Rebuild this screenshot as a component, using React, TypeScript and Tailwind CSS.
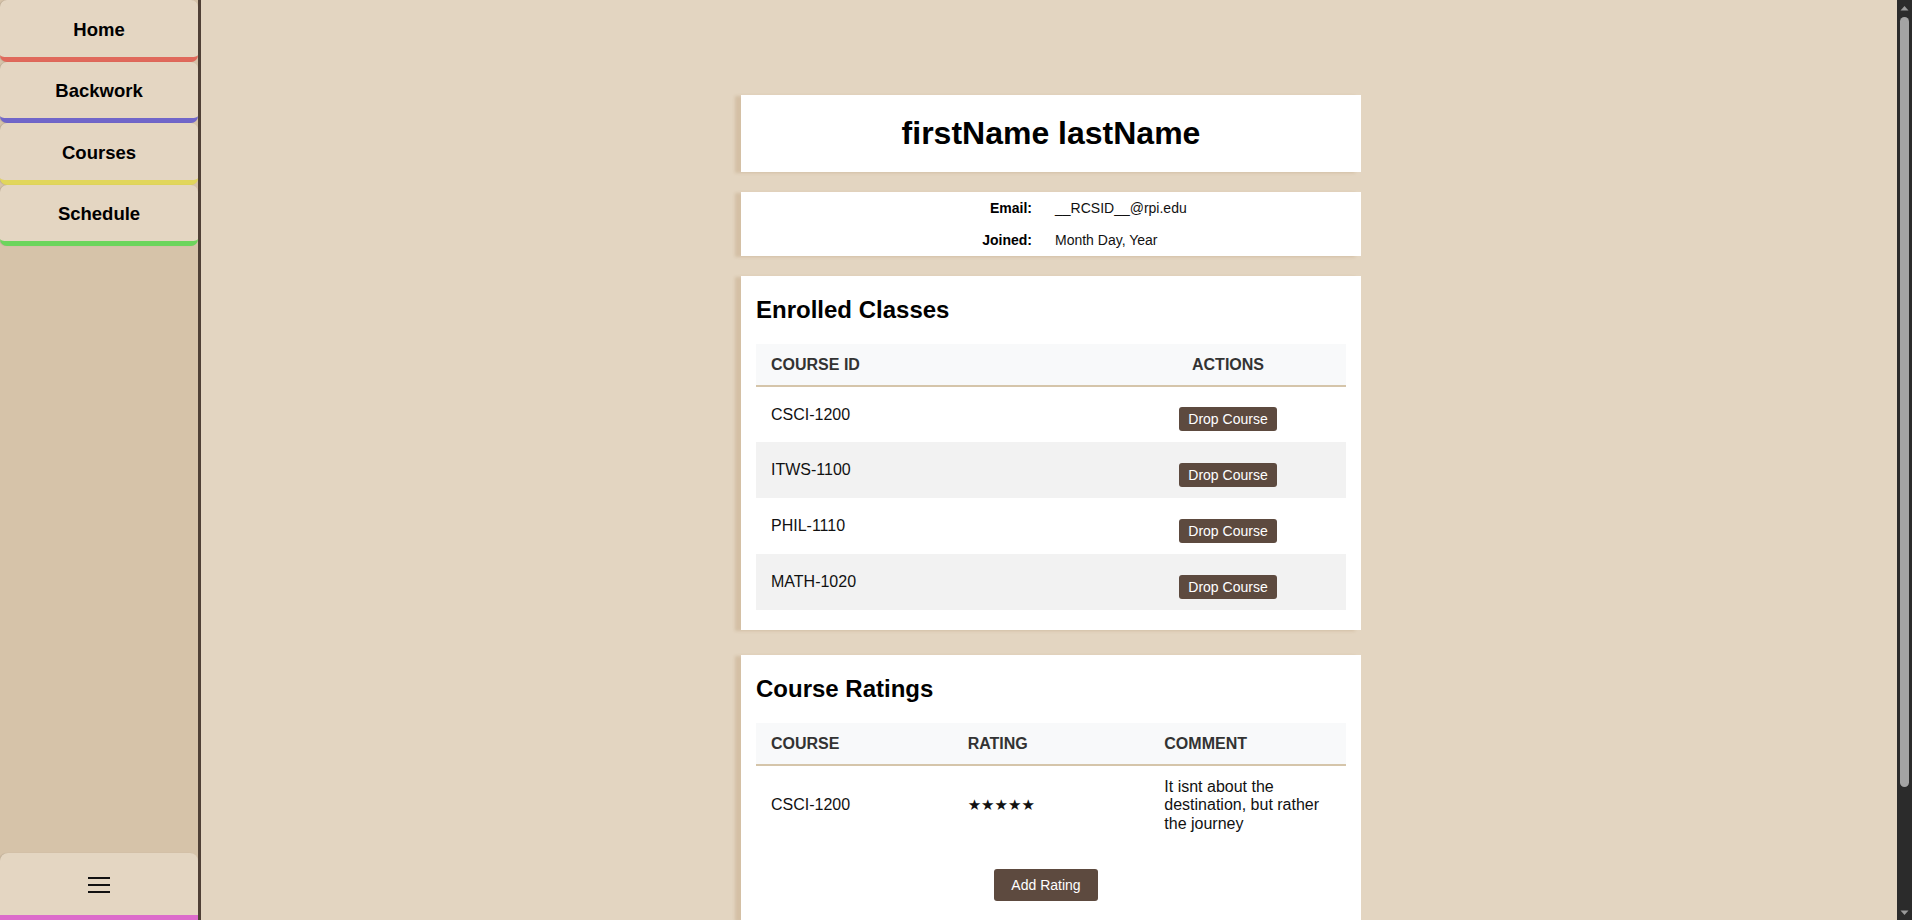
import React from 'react';

const NAV_ITEMS = [
  { label: 'Home', bar: 'border-[#e0695b]' },
  { label: 'Backwork', bar: 'border-[#7066c9]' },
  { label: 'Courses', bar: 'border-[#e1d65c]' },
  { label: 'Schedule', bar: 'border-[#6cd55c]' },
];

const ENROLLED = ['CSCI-1200', 'ITWS-1100', 'PHIL-1110', 'MATH-1020'];

const RATINGS = [
  { course: 'CSCI-1200', stars: 5, comment: 'It isnt about the destination, but rather the journey' },
];

const Card: React.FC<{ className?: string; children: React.ReactNode }> = ({ className = '', children }) => (
  <div className={`bg-white shadow-[-6px_1px_3px_rgba(160,120,70,0.22)] ${className}`}>{children}</div>
);

// dark page scrollbar, as drawn in the screenshot
const ScrollBar = () => (
  <div className="w-[15px] shrink-0 h-full bg-[#2b2b2b] flex flex-col items-center">
    <div className="h-[15px] w-full flex items-center justify-center">
      <svg width="9" height="6" viewBox="0 0 9 6">
        <path d="M0.5 5.5 L4.5 1 L8.5 5.5 Z" fill="#9a9a9a" />
      </svg>
    </div>
    <div className="flex-1 w-full flex justify-center">
      <div className="mt-[2px] h-[770px] w-[9px] rounded-full bg-[#a3a3a3]" />
    </div>
    <div className="h-[15px] w-full flex items-center justify-center">
      <svg width="9" height="6" viewBox="0 0 9 6">
        <path d="M0.5 0.5 L4.5 5 L8.5 0.5 Z" fill="#9a9a9a" />
      </svg>
    </div>
  </div>
);

export default function App() {
  return (
    <div className="flex h-screen w-full overflow-hidden font-['Liberation_Sans',Arial,sans-serif] text-black">
      {/* Sidebar */}
      <aside className="w-[201px] shrink-0 h-full bg-[#d6c3a9] border-r-[3px] border-[#4f4036] flex flex-col justify-between">
        <nav className="flex flex-col">
          {NAV_ITEMS.map((item) => (
            <div
              key={item.label}
              className={`h-[61.5px] pt-[3px] bg-[#e4d6c2] border-b-[5px] ${item.bar} rounded-[7px] flex items-center justify-center text-[18.5px] font-bold cursor-pointer shadow-[-1px_0_1px_rgba(0,0,0,0.12)]`}
            >
              {item.label}
            </div>
          ))}
        </nav>
        <div className="h-[67px] bg-[#e4d6c2] border-b-[5px] border-[#dc6bcb] rounded-t-[8px] flex items-center justify-center shadow-[-1px_0_1px_rgba(0,0,0,0.12)]">
          <svg width="24" height="18" viewBox="0 0 24 18" className="mt-[1px]">
            <rect x="1" y="1" width="22" height="2" fill="#111" />
            <rect x="1" y="8" width="22" height="2" fill="#111" />
            <rect x="1" y="15" width="22" height="2" fill="#111" />
          </svg>
        </div>
      </aside>

      {/* Main */}
      <main className="flex-1 h-full overflow-y-auto bg-[#e3d5c1] [scrollbar-width:none]">
        <div className="w-[620px] mx-auto translate-x-[2px] pt-[95px] pb-[150px] flex flex-col text-black">
          <Card className="py-[20px] mb-[20px]">
            <h1 className="text-[32px] leading-[37px] font-bold text-center">firstName lastName</h1>
          </Card>

          <Card className="mb-[20px]">
            <div className="grid grid-cols-[291px_1fr] text-[14px] leading-[32px]">
              <div className="text-right font-bold">Email:</div>
              <div className="pl-[23px] text-[#111]">__RCSID__@rpi.edu</div>
              <div className="text-right font-bold">Joined:</div>
              <div className="pl-[23px] text-[#111]">Month Day, Year</div>
            </div>
          </Card>

          <Card className="px-[15px] pt-[20px] pb-[20px] mb-[25px]">
            <h2 className="text-[24px] leading-[28px] font-bold mb-[20px]">Enrolled Classes</h2>
            <table className="w-full border-collapse">
              <thead>
                <tr className="bg-[#f8f9fa] border-b-2 border-[#d5c5aa]">
                  <th className="w-[354px] h-[42px] px-[15px] text-left text-[16px] font-bold text-[#333]">COURSE ID</th>
                  <th className="h-[42px] px-[15px] text-center text-[16px] font-bold text-[#333]">ACTIONS</th>
                </tr>
              </thead>
              <tbody>
                {ENROLLED.map((c, i) => (
                  <tr key={c} className={i % 2 === 1 ? 'bg-[#f2f2f2]' : 'bg-white'}>
                    <td className="h-[56px] px-[15px] text-[16px] text-[#111] align-middle">{c}</td>
                    <td className="h-[56px] px-[15px] text-center align-middle">
                      <button className="mt-[9px] bg-[#5d4a3f] text-white text-[14px] leading-[16px] px-[9px] py-[4px] rounded-[3px]">
                        Drop Course
                      </button>
                    </td>
                  </tr>
                ))}
              </tbody>
            </table>
          </Card>

          <Card className="px-[15px] pt-[20px] pb-[20px]">
            <h2 className="text-[24px] leading-[28px] font-bold mb-[20px]">Course Ratings</h2>
            <table className="w-full border-collapse table-fixed">
              <thead>
                <tr className="bg-[#f8f9fa] border-b-2 border-[#d5c5aa]">
                  <th className="h-[42px] px-[15px] text-left text-[16px] font-bold text-[#333]">COURSE</th>
                  <th className="h-[42px] px-[15px] text-left text-[16px] font-bold text-[#333]">RATING</th>
                  <th className="h-[42px] px-[15px] text-left text-[16px] font-bold text-[#333]">COMMENT</th>
                </tr>
              </thead>
              <tbody>
                {RATINGS.map((r) => (
                  <tr key={r.course}>
                    <td className="px-[15px] py-[12px] text-[16px] leading-[18.4px] text-[#111] align-middle">{r.course}</td>
                    <td className="px-[15px] py-[12px] text-[15px] leading-[18.4px] text-[#111] align-middle font-['DejaVu_Sans',sans-serif]">
                      {'★'.repeat(r.stars)}
                    </td>
                    <td className="px-[15px] py-[12px] text-[16px] leading-[18.4px] text-[#111] align-middle">{r.comment}</td>
                  </tr>
                ))}
              </tbody>
            </table>
            <div className="flex justify-center mt-[24px] pr-[10px]">
              <button className="bg-[#5d4a3f] text-white text-[14px] leading-[16px] px-[17px] py-[8px] rounded-[3px]">
                Add Rating
              </button>
            </div>
          </Card>
        </div>
      </main>

      <ScrollBar />
    </div>
  );
}
